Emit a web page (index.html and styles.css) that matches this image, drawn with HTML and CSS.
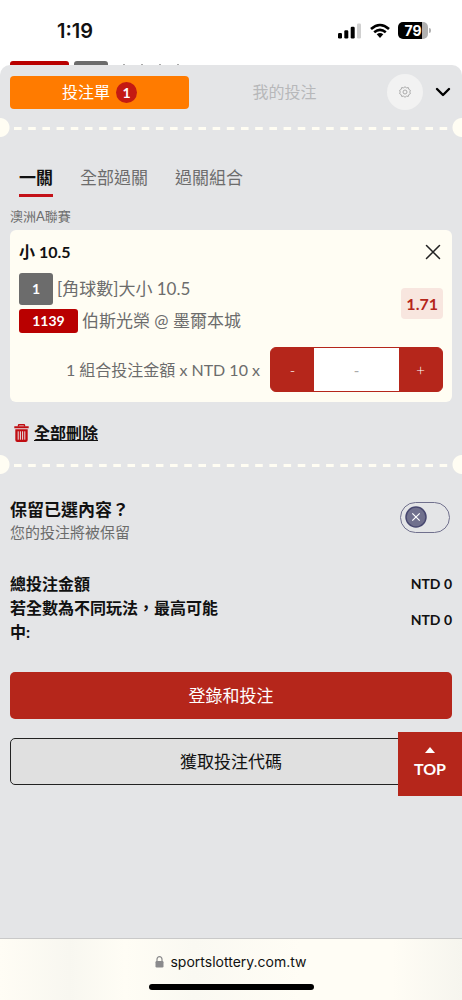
FILE: index.html
```html
<!DOCTYPE html>
<html lang="zh-Hant">
<head>
<meta charset="utf-8">
<meta name="viewport" content="width=device-width, initial-scale=1">
<title>投注單</title>
<link rel="stylesheet" href="styles.css">
</head>
<body>
<header class="status">
  <span class="time">1:19</span>
  <div class="status-icons">
    <svg width="24" height="16" viewBox="0 0 24 16" aria-hidden="true"><rect x="0" y="10" width="4" height="5.5" rx="1.2"/><rect x="6.3" y="7.2" width="4" height="8.3" rx="1.2"/><rect x="12.7" y="3.7" width="4" height="11.8" rx="1.2"/><rect x="19" y="0.5" width="4" height="15" rx="1.2" fill="#d0d0d0"/></svg>
    <svg width="20" height="16" viewBox="0 0 20 16" aria-hidden="true"><path d="M1 6Q10-2 19 6M4.2 9.2Q10 4.4 15.8 9.2" fill="none" stroke="#000" stroke-width="2.6"/><path d="M6.7 11.3Q10 8.8 13.3 11.3L10 15Z"/></svg>
    <span class="battery">79</span>
  </div>
</header>
<div class="peek" aria-hidden="true"><i class="peek-red"></i><i class="peek-gray"></i><i class="peek-line"></i></div>
<main class="sheet">
  <nav class="top-tabs">
    <button class="tab tab-on" type="button">投注單 <span class="count">1</span></button>
    <button class="tab" type="button">我的投注</button>
    <button class="gear" type="button" aria-label="設定"><svg width="12" height="12" viewBox="0 0 24 24" fill="none" stroke="#aaa" stroke-width="2"><circle cx="12" cy="12" r="4"/><path d="M12 1.500l3 2.200 3.700-.5 1 3.600 3.200 2L21.500 12l1.400 3.200-3.200 2-1 3.600-3.700-.5-3 2.200-3-2.200-3.700.5-1-3.600-3.200-2L2.500 12 1.100 8.800l3.200-2 1-3.600 3.700.5z"/></svg></button>
    <button class="fold" type="button" aria-label="收合"><svg width="18" height="12" viewBox="0 0 18 12" fill="none" stroke="#000" stroke-width="2.400" stroke-linecap="round" stroke-linejoin="round"><path d="M3 3l6 6 6-6"/></svg></button>
  </nav>
  <div class="tear"></div>
  <nav class="modes">
    <button class="mode mode-on" type="button">一關</button>
    <button class="mode" type="button">全部過關</button>
    <button class="mode" type="button">過關組合</button>
  </nav>
  <p class="league">澳洲A聯賽</p>
  <section class="card">
    <div class="card-head">
      <h2 class="pick">小 10.5</h2>
      <button class="close" type="button" aria-label="移除"><svg width="16" height="16" viewBox="0 0 16 16" stroke="#222" stroke-width="1.500" stroke-linecap="round"><path d="M1.500 1.500l13 13M14.500 1.500l-13 13"/></svg></button>
    </div>
    <div class="card-body">
      <div class="info">
        <div class="line"><span class="tag tag-gray">1</span><span>[角球數]大小 10.5</span></div>
        <div class="line"><span class="tag tag-red">1139</span><span>伯斯光榮 @ 墨爾本城</span></div>
      </div>
      <span class="odds">1.71</span>
    </div>
    <div class="stake">
      <label class="stake-label" for="stake">1 組合投注金額 x NTD 10 x</label>
      <div class="stepper">
        <button class="step" type="button">-</button>
        <input class="amount" id="stake" type="text" placeholder="-">
        <button class="step" type="button">+</button>
      </div>
    </div>
  </section>
  <button class="clear" type="button"><svg width="15" height="18" viewBox="0 0 15 18" aria-hidden="true"><path d="M4.500 2.500V1.200Q4.500.7 5 .7h5q.5 0 .5.500v1.300" fill="none" stroke="#c00d12" stroke-width="1.400"/><path d="M.3 2.300h14.400v2H.3zM1.300 5.300h12.400V16q0 2-2 2H3.300q-2 0-2-2z" fill="#c00d12"/><path d="M4.200 7.300v8.400M6.400 7.300v8.400M8.600 7.300v8.400M10.800 7.300v8.400" stroke="#e5e6e8" stroke-width="1"/></svg><span class="clear-text">全部刪除</span></button>
  <div class="tear"></div>
  <div class="keep">
    <label for="keep"><strong class="keep-title">保留已選內容？</strong><span class="keep-note">您的投注將被保留</span></label>
    <span class="switch"><input class="switch-input" id="keep" type="checkbox"><svg class="knob" width="22" height="22" viewBox="0 0 22 22" aria-hidden="true"><circle cx="11" cy="11" r="10" fill="#70708d" stroke="#47476f" stroke-width="1.500"/><path d="M7.300 7.300l7.400 7.400M14.700 7.300l-7.400 7.400" stroke="#fff" stroke-width="1.200"/></svg></span>
  </div>
  <dl class="totals">
    <div class="total"><dt>總投注金額</dt><dd>NTD 0</dd></div>
    <div class="total"><dt>若全數為不同玩法，最高可能中:</dt><dd>NTD 0</dd></div>
  </dl>
  <div class="actions">
    <button class="action primary" type="button">登錄和投注</button>
    <button class="action secondary" type="button">獲取投注代碼</button>
    <a class="to-top" href="#"><svg width="10" height="6" viewBox="0 0 10 6" fill="#fff" aria-hidden="true"><path d="M5 0l5 6H0z"/></svg>TOP</a>
  </div>
</main>
<footer class="browser">
  <div class="address"><svg width="9" height="12" viewBox="0 0 9 12" aria-hidden="true"><path d="M2 6V3.200a2.500 2.500 0 015 0V6" fill="none" stroke="#8a8a8c" stroke-width="1.200"/><rect x="0.500" y="5" width="8" height="6.500" rx="1.200" fill="#8a8a8c"/></svg>sportslottery.com.tw</div>
  <div class="home"></div>
</footer>
</body>
</html>
```
FILE: styles.css
```css
* { box-sizing: border-box; }
body {
  margin: 0;
  min-height: 100vh;
  display: flex;
  flex-direction: column;
  background: #fff;
  color: #111;
  font-family: Lato, "Noto Sans CJK TC", sans-serif;
  font-size: 17px;
  line-height: 24px;
}
button, input { font: inherit; color: inherit; margin: 0; padding: 0; border: 0; background: none; }
button { cursor: pointer; }
svg { display: block; flex: none; }
p, h2, dl, dd { margin: 0; }

.status {
  display: flex;
  justify-content: space-between;
  align-items: center;
  height: 61px;
  padding: 0 32px 0 57px;
}
.time { font: 600 20px/24px Inter, sans-serif; }
.status-icons { display: flex; align-items: center; gap: 8px; }
.battery {
  position: relative;
  width: 30px;
  height: 17px;
  margin-right: 2px;
  border-radius: 5px;
  background: linear-gradient(90deg, #000 80%, #b0b0b0 80%);
  color: #fff;
  font: 700 14px/17px Inter, sans-serif;
  text-align: center;
}
.battery::after {
  content: "";
  position: absolute;
  left: 31px;
  top: 6px;
  width: 2px;
  height: 5px;
  border-radius: 0 2px 2px 0;
  background: #b0b0b0;
}
.peek { display: flex; gap: 5px; height: 4px; padding: 0 10px; }
.peek-red, .peek-gray { height: 4px; border-radius: 3px 3px 0 0; }
.peek-red { width: 59px; background: #b90000; }
.peek-gray { width: 34px; background: #6c6c6c; }
.peek-line { width: 62px; height: 1px; margin: 3px 0 0 10px; background: repeating-linear-gradient(90deg, #aaa 0 2px, #fff 2px 18px); }

.sheet {
  flex: 1;
  display: flex;
  flex-direction: column;
  padding-bottom: 24px;
  border-radius: 10px 10px 0 0;
  background: #e4e5e7;
}
.top-tabs { display: flex; align-items: center; padding: 9px 10px 8px; }
.tab {
  flex: 1;
  display: flex;
  justify-content: center;
  align-items: center;
  gap: 6px;
  height: 33px;
  margin-right: 6px;
  border-radius: 4px;
  color: #b7b8ba;
  font-size: 16px;
}
.tab-on { background: #ff7b00; color: #fff; }
.count {
  width: 21px;
  height: 21px;
  border-radius: 50%;
  background: #c41a12;
  font-size: 14px;
  font-weight: 700;
  line-height: 21px;
}
.gear {
  display: grid;
  place-items: center;
  width: 36px;
  height: 36px;
  margin: 0 11px 0 7px;
  border-radius: 50%;
  background: #f2f2f2;
}

.tear {
  height: 19px;
  padding: 9px 8px 7px 14px;
  background:
    radial-gradient(circle at 0 50%, #fffdf3 9px, transparent 10px),
    radial-gradient(circle at 100% 50%, #fffdf3 9px, transparent 10px);
}
.tear::before {
  content: "";
  display: block;
  height: 3px;
  background: linear-gradient(90deg, #fffdf3 50%, transparent 50%) 0 0 / 14px 3px round;
}

.modes { display: flex; gap: 27px; padding: 26px 19px 0; }
.mode { height: 34px; padding-bottom: 4px; color: #6c6c6c; }
.mode-on { border-bottom: 3px solid #c41219; padding-bottom: 1px; color: #111; font-weight: 700; }
.league { margin: 9px 10px 4px; color: #6c6c6c; font-size: 13px; line-height: 20px; }

.card { margin: 0 10px; padding: 10px 9px; border-radius: 6px; background: #fffdf3; color: #6c6c6c; }
.card-head { display: flex; justify-content: space-between; align-items: center; }
.pick { color: #111; font-size: 16px; font-weight: 700; }
.close { padding: 4px 2px; }
.card-body { display: flex; justify-content: space-between; align-items: center; margin-top: 9px; }
.info { display: grid; gap: 4px; }
.line { display: flex; align-items: center; gap: 4px; }
.tag { border-radius: 3px; color: #fff; font-size: 14px; font-weight: 700; text-align: center; }
.tag-gray { width: 34px; line-height: 32px; background: #6c6c6c; }
.tag-red { width: 59px; line-height: 24px; background: #b90000; }
.odds { padding: 0 5px; border-radius: 4px; background: #f8e6df; color: #b5261b; font-size: 16px; font-weight: 700; line-height: 31px; }
.stake { display: flex; justify-content: flex-end; align-items: center; gap: 10px; margin-top: 14px; }
.stake-label { font-size: 16px; }
.stepper { display: flex; height: 45px; border: 1px solid #b5261b; border-radius: 6px; background: #b5261b; }
.step { width: 43px; color: #fff; font-size: 15px; font-weight: 300; }
.amount { width: 85px; background: #fff; font-size: 15px; text-align: center; }
.amount::placeholder { color: #aaa; opacity: 1; }

.clear { display: flex; align-items: center; align-self: flex-start; gap: 5px; margin: 19px 0 10px 14px; }
.clear-text { font-size: 16px; font-weight: 700; text-decoration: underline; }

.keep { display: flex; justify-content: space-between; align-items: center; margin: 24px 12px 0 10px; }
.keep-title, .keep-note { display: block; }
.keep-title { font-weight: 700; }
.keep-note { color: #6c6c6c; font-size: 15px; line-height: 20px; }
.switch { position: relative; width: 50px; height: 31px; margin-top: -6px; }
.switch-input { appearance: none; display: block; width: 50px; height: 31px; margin: 0; border: 1px solid #70708d; border-radius: 16px; }
.knob { position: absolute; left: 5px; top: 4px; pointer-events: none; }

.totals { margin: 30px 10px 28px; }
.total { display: flex; justify-content: space-between; align-items: center; }
.total dt { max-width: 50%; font-size: 16px; font-weight: 700; }
.total dd { font-size: 14px; font-weight: 700; }
.total dt { flex-basis: 218px; }

.actions { position: relative; display: grid; gap: 19px; margin: 0 10px; }
.action { height: 47px; border-radius: 5px; }
.primary { background: #b5261b; color: #fff; }
.secondary { border: 1px solid #222; background: #e0e0e0; }
.to-top {
  position: absolute;
  right: -10px;
  bottom: -11px;
  display: flex;
  flex-direction: column;
  align-items: center;
  justify-content: center;
  gap: 4px;
  width: 64px;
  height: 64px;
  background: #b5261b;
  color: #fff;
  font-size: 16px;
  font-weight: 700;
  text-decoration: none;
}

.browser {
  display: flex;
  flex-direction: column;
  align-items: center;
  height: 62px;
  padding-top: 11px;
  border-top: 1px solid #c9c9c9;
  background: linear-gradient(90deg, #fffdf5, #f8f7f0 15%, #fffdf5 27%, #faf9f2 42%, #fffdf5 65%, #fffdf5 85%, #f6f5ee);
}
.address { display: flex; align-items: center; gap: 6px; font: 14px/24px Inter, sans-serif; }
.home { width: 165px; height: 6px; margin-top: 10px; border-radius: 3px; background: #000; }
```
